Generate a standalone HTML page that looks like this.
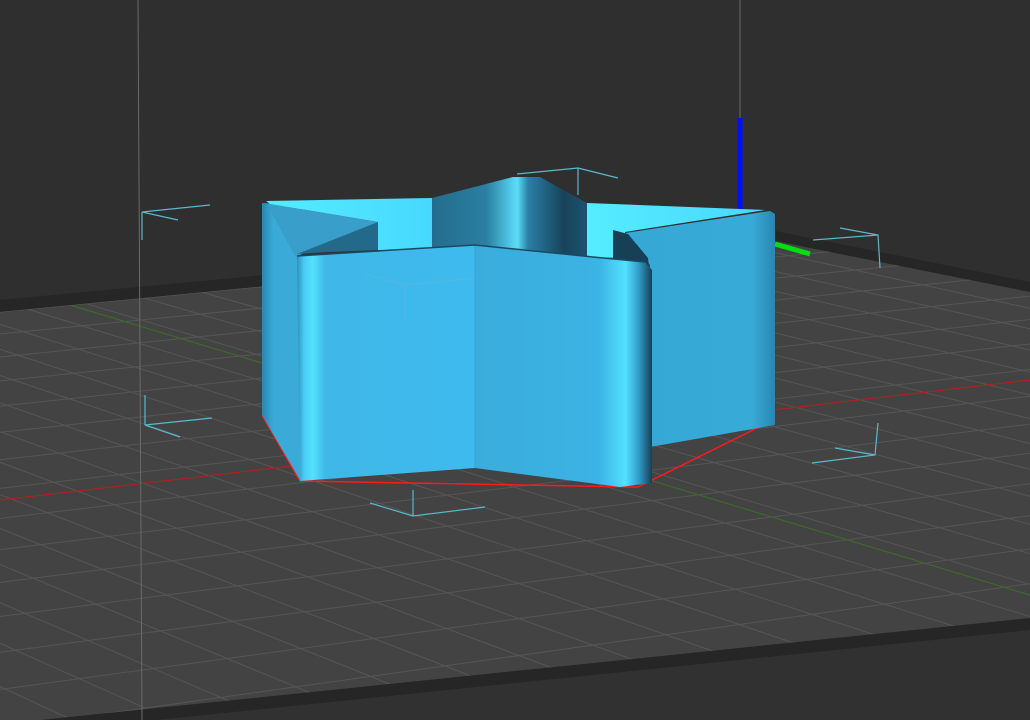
<!DOCTYPE html>
<html><head><meta charset="utf-8"><style>
html,body{margin:0;padding:0;background:#313131;width:1030px;height:720px;overflow:hidden}
svg{display:block;position:absolute;left:0;top:0}
</style></head><body>
<svg width="1030" height="720" viewBox="0 0 1030 720" xmlns="http://www.w3.org/2000/svg">
<defs>
<clipPath id="bed"><polygon points="0,312 760,238 1030,292 1030,618 40,720 0,720"/></clipPath>
<linearGradient id="bump" x1="0" x2="1" y1="0" y2="0">
<stop offset="0" stop-color="#246c8c"/><stop offset="0.35" stop-color="#2a7fa2"/><stop offset="0.55" stop-color="#5cdcfa"/><stop offset="0.62" stop-color="#2a80a6"/><stop offset="0.85" stop-color="#17435a"/><stop offset="1" stop-color="#1d5270"/></linearGradient>
<linearGradient id="fl" x1="0" x2="1"><stop offset="0" stop-color="#2f8fb8"/><stop offset="0.04" stop-color="#48cdf6"/><stop offset="0.09" stop-color="#56e0ff"/><stop offset="0.16" stop-color="#3fb8e8"/><stop offset="1" stop-color="#3fbaee"/></linearGradient>
<linearGradient id="fr" x1="0" x2="1"><stop offset="0" stop-color="#3aaddc"/><stop offset="0.7" stop-color="#3bb3e4"/><stop offset="0.85" stop-color="#52e2ff"/><stop offset="0.93" stop-color="#2f97c4"/><stop offset="1" stop-color="#173f55"/></linearGradient>
<linearGradient id="rw" x1="0" x2="1"><stop offset="0" stop-color="#36a8d6"/><stop offset="0.85" stop-color="#38aad8"/><stop offset="1" stop-color="#2a86b0"/></linearGradient>
<linearGradient id="lw" x1="0" x2="1"><stop offset="0" stop-color="#2a86b0"/><stop offset="0.3" stop-color="#3aaad8"/><stop offset="1" stop-color="#3aaad8"/></linearGradient>
<linearGradient id="ci" x1="0" x2="1"><stop offset="0" stop-color="#55ecff"/><stop offset="1" stop-color="#48d8ff"/></linearGradient>
</defs>
<rect width="1030" height="720" fill="#313131"/>
<rect width="1030" height="300" fill="#2f2f2f"/>
<polygon points="0,300 760,228 1030,282 1030,630 40,732 0,732" fill="#262626"/>
<polygon points="0,312 760,238 1030,292 1030,618 40,720 0,720" fill="#434343"/>
<g id="grid" clip-path="url(#bed)" stroke="#565656" stroke-width="1" fill="none"></g>
<g clip-path="url(#bed)">
<line x1="70" y1="305" x2="1030" y2="595" stroke="#3a6a2a" stroke-width="1.2"/>
<line x1="0" y1="500" x2="1030" y2="380" stroke="#b02020" stroke-width="1.2"/>
</g>
<line x1="138" y1="0" x2="142" y2="720" stroke="#6a6a6a" stroke-width="1"/>
<line x1="740" y1="0" x2="740" y2="120" stroke="#6a6a6a" stroke-width="1"/>
<g stroke="#5ab8cc" stroke-width="1.2" fill="none">
<polyline points="178,220 142,212 210,205"/><line x1="142" y1="212" x2="142" y2="240"/>
<polyline points="180,437 145,425 212,418"/><line x1="145" y1="425" x2="145" y2="395"/>
<polyline points="813,240 878,235 880,268"/><line x1="878" y1="235" x2="840" y2="228"/>
<polyline points="812,463 875,455 878,423"/><line x1="875" y1="455" x2="835" y2="448"/>
<polyline points="370,503 413,516 485,507"/><line x1="413" y1="516" x2="413" y2="490"/>
<polyline points="517,174 578,168 618,178"/><line x1="578" y1="168" x2="578" y2="195"/>
</g>
<polyline points="262,415 300,481 638,487 757,428" stroke="#ff1a1a" stroke-width="1.5" fill="none"/>
<line x1="740" y1="118" x2="740" y2="212" stroke="#0010ff" stroke-width="5"/>
<line x1="775" y1="244" x2="810" y2="254" stroke="#00e010" stroke-width="5"/>
<!-- object -->
<polygon points="262,203 300,205 300,480 262,415" fill="url(#lw)"/>
<polygon points="266,201 432,198 432,250 378,250 378,222 270,204" fill="url(#ci)"/>
<polygon points="270,204 378,222 378,226 297,256 297,260 268,206" fill="#3a9ecb"/>
<polygon points="297,254 378,222 378,250 330,252" fill="#236a8a"/>
<polygon points="432,198 513,177 540,177 587,203 587,257 432,250" fill="url(#bump)"/>
<polygon points="587,203 765,210 625,232 625,258 587,257" fill="url(#ci)"/>
<polygon points="625,233 770,211 775,214 775,425 650,447 650,265" fill="url(#rw)"/>
<polygon points="613,230 628,234 648,258 650,275 638,262 613,258" fill="#173f55"/>
<polygon points="297,256 475,245 475,468 300,481" fill="url(#fl)"/>
<polygon points="475,245 603,258 645,262 652,270 652,483 620,487 475,468" fill="url(#fr)"/>
<line x1="475" y1="245" x2="475" y2="468" stroke="#36a3d4" stroke-width="1"/>
<g stroke="#6fb7c9" stroke-width="0.8" fill="none" opacity="0.6"><polyline points="366,274 405,285 475,278"/><line x1="405" y1="285" x2="405" y2="320"/></g>
<polyline points="297,256 475,245 603,258 645,262" stroke="#1a4a62" stroke-width="1.5" fill="none"/>
</svg>
<script>
(function(){
var g=document.getElementById('grid'),ns='http://www.w3.org/2000/svg';
function L(x1,y1,x2,y2){var l=document.createElementNS(ns,'line');l.setAttribute('x1',x1);l.setAttribute('y1',y1);l.setAttribute('x2',x2);l.setAttribute('y2',y2);g.appendChild(l);}
var VA=[9531,-612];var y=312,sp=22;
for(var i=0;i<40&&y<1000;i++){L(0,y,VA[0],VA[1]);y+=sp;sp*=1.045;}
var VB=[-2464,-455];
for(var x=-900;x<=760;x+=58){var yb=312-0.0974*x;var dx=x-VB[0],dy=yb-VB[1];var t=3000/dx;L(VB[0],VB[1],x+dx*t,yb+dy*t);}
})();
</script>
</body></html>
